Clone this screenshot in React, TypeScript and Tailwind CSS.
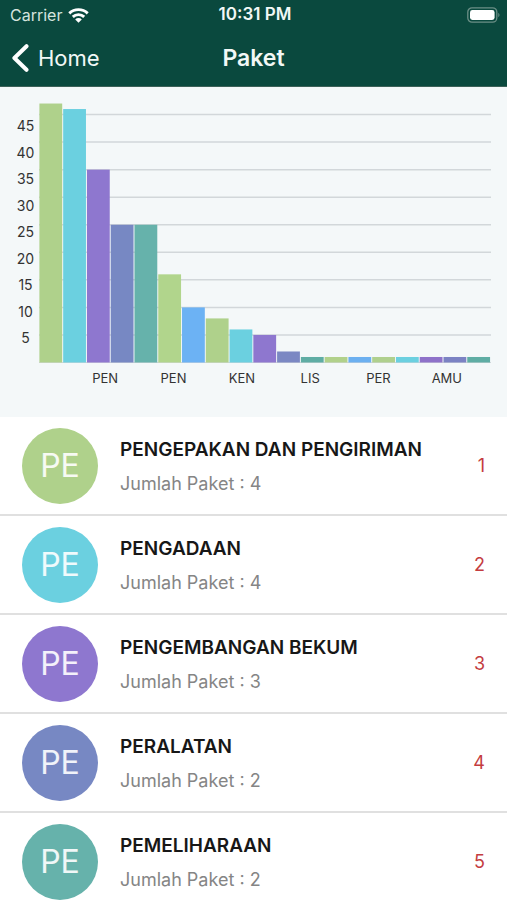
const bars = [
  { value: 47, color: "#afd18b" },
  { value: 46, color: "#6bd0e0" },
  { value: 35, color: "#8e77cf" },
  { value: 25, color: "#7788c3" },
  { value: 25, color: "#66b2ab" },
  { value: 16, color: "#b1d58c" },
  { value: 10, color: "#6cb2f4" },
  { value: 8, color: "#afd18b" },
  { value: 6, color: "#6bd0e0" },
  { value: 5, color: "#8e77cf" },
  { value: 2, color: "#7b88c3" },
  { value: 1, color: "#5fada4" },
  { value: 1, color: "#b1d18b" },
  { value: 1, color: "#6cb0f0" },
  { value: 1, color: "#afd08e" },
  { value: 1, color: "#6bd0e0" },
  { value: 1, color: "#8e72c9" },
  { value: 1, color: "#7b82c3" },
  { value: 1, color: "#5fada4" },
]

const ticks = [45, 40, 35, 30, 25, 20, 15, 10, 5]
const labels = ["PEN", "PEN", "KEN", "LIS", "PER", "AMU"]

const packages = [
  { name: "PENGEPAKAN DAN PENGIRIMAN", total: 4, color: "bg-[#afd18b]" },
  { name: "PENGADAAN", total: 4, color: "bg-[#6bd0e0]" },
  { name: "PENGEMBANGAN BEKUM", total: 3, color: "bg-[#8e77cf]" },
  { name: "PERALATAN", total: 2, color: "bg-[#7788c3]" },
  { name: "PEMELIHARAAN", total: 2, color: "bg-[#66b2ab]" },
]

function StatusBar() {
  return (
    <div className="grid h-[30px] grid-cols-3 items-center pl-[10px] pr-[7px]">
      <div className="flex items-center gap-[6px] text-base text-[#d5e4de]">
        Carrier
        <svg width="21" height="15" viewBox="0 0 21 15" fill="none" stroke="#fff" strokeWidth="2.9" aria-hidden="true">
          <path d="M1.3 5.4a13.2 13.2 0 0 1 18.4 0" />
          <path d="M4.8 8.9a8.2 8.2 0 0 1 11.4 0" />
          <path d="M7.2 11.5a4.6 4.6 0 0 1 6.6 0l-3.3 3.3z" fill="#fff" stroke="none" />
        </svg>
      </div>
      <div className="text-center text-[17px] font-semibold">10:31 PM</div>
      <svg className="justify-self-end" width="33" height="16" viewBox="0 0 33 16" fill="none" aria-hidden="true">
        <rect x="0.8" y="0.8" width="29" height="14.4" rx="4.2" stroke="#6b8f86" strokeWidth="1.3" />
        <rect x="3" y="3" width="24.6" height="10" rx="2.4" fill="#fff" />
        <path d="M31.3 5.8c1.6.8 1.6 3.6 0 4.4z" fill="#6b8f86" />
      </svg>
    </div>
  )
}

function NavBar() {
  return (
    <nav className="grid h-14 grid-cols-3 items-center px-3">
      <a href="#home" className="flex items-center gap-2 text-[22px]">
        <svg width="18" height="28" viewBox="0 0 18 28" fill="none" stroke="#fff" strokeWidth="4" strokeLinecap="round" strokeLinejoin="round" aria-hidden="true">
          <path d="M14.5 2.2 2.4 14l12.1 11.8" />
        </svg>
        Home
      </a>
      <h1 className="text-center text-[23px] font-semibold">Paket</h1>
    </nav>
  )
}

function Chart() {
  return (
    <section className="bg-[#f4f8f9] pb-[29px] pr-4 pt-4 text-[#333]">
      <div className="flex">
        {/* Y axis */}
        <div className="flex w-[39px] flex-col justify-between pb-[15px] pl-3 pt-[13px] text-center text-sm leading-5">
          {ticks.map((tick) => (
            <span key={tick}>{tick}</span>
          ))}
        </div>

        {/* Bars over grid lines, 5.51 units of height per package */}
        <svg className="h-[260px] min-w-0 flex-1" viewBox="0 0 452 260" preserveAspectRatio="none" role="img" aria-label="Paket">
          {ticks.map((tick) => (
            <line key={tick} x1="0" x2="452" y1={259.5 - tick * 5.51} y2={259.5 - tick * 5.51} stroke="#d2d7da" strokeWidth="1.5" />
          ))}
          <line x1="0" x2="452" y1="259.5" y2="259.5" stroke="#d2d7da" />
          {bars.map((bar, index) => (
            <rect
              key={index}
              x={index * 23.77 + 0.4}
              y={259.5 - bar.value * 5.51}
              width="22.8"
              height={bar.value * 5.51}
              fill={bar.color}
            />
          ))}
        </svg>
      </div>

      {/* X axis */}
      <div className="grid grid-cols-6 pl-[71px] pr-[10px] pt-[5px] text-center text-[13px] leading-5">
        {labels.map((label, index) => (
          <span key={index}>{label}</span>
        ))}
      </div>
    </section>
  )
}

function PackageList() {
  return (
    <ol>
      {packages.map((item, index) => (
        <li key={item.name} className="flex items-center border-b-2 border-[#e0e0e0] px-[22px] pb-[10px] pt-[11px]">
          <div className={`flex size-[76px] shrink-0 items-center justify-center rounded-full text-[32px] text-white/90 ${item.color}`}>
            PE
          </div>
          <div className="ml-[22px] min-w-0 flex-1 pt-px">
            <h2 className="text-[19px] leading-[34px] font-semibold text-[#171717]">{item.name}</h2>
            <p className="text-lg leading-[34px] text-[#858585]">Jumlah Paket : {item.total}</p>
          </div>
          <span className="text-lg text-[#c43c40]">{index + 1}</span>
        </li>
      ))}
    </ol>
  )
}

export default function App() {
  return (
    <main className="h-screen overflow-hidden bg-white font-['Inter',sans-serif]">
      <header className="border-b border-[#3c6158] bg-[#0a493e] text-[#f2f8f6]">
        <StatusBar />
        <NavBar />
      </header>
      <Chart />
      <PackageList />
    </main>
  )
}
